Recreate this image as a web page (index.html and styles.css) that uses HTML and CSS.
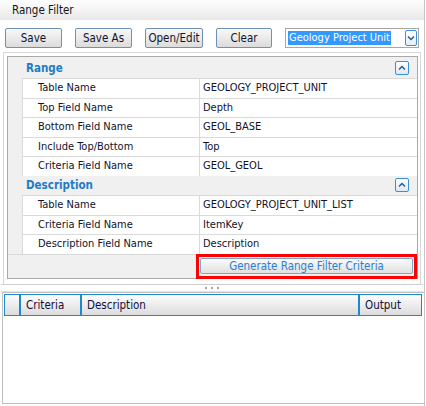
FILE: index.html
```html
<!DOCTYPE html>
<html>
<head>
<meta charset="utf-8">
<link rel="stylesheet" href="styles.css">
</head>
<body>
<div class="window">
  <div class="titlebar">Range Filter</div>
  <div class="toolbar">
    <button class="btn b-save">Save</button>
    <button class="btn b-saveas">Save As</button>
    <button class="btn b-open">Open/Edit</button>
    <button class="btn b-clear">Clear</button>
    <div class="combo">
      <span class="sel">Geology Project Unit</span>
      <span class="drop"><svg width="10" height="14" viewBox="0 0 10 14"><path d="M2 5.5 L5 8.5 L8 5.5" fill="none" stroke="#1d5f9a" stroke-width="1.5"/></svg></span>
    </div>
  </div>
  <div class="toppane">
    <div class="pgrid">
      <div class="cat cat-first">
        <span class="cat-title">Range</span>
        <span class="collapse"><svg width="12" height="12" viewBox="0 0 12 12"><path d="M3 7.5 L6 4.5 L9 7.5" fill="none" stroke="#1d5f9a" stroke-width="1.5"/></svg></span>
      </div>
      <div class="rows">
        <div class="row"><div class="name">Table Name</div><div class="val">GEOLOGY_PROJECT_UNIT</div></div>
        <div class="row"><div class="name">Top Field Name</div><div class="val">Depth</div></div>
        <div class="row"><div class="name">Bottom Field Name</div><div class="val">GEOL_BASE</div></div>
        <div class="row"><div class="name">Include Top/Bottom</div><div class="val">Top</div></div>
        <div class="row"><div class="name">Criteria Field Name</div><div class="val">GEOL_GEOL</div></div>
      </div>
      <div class="cat">
        <span class="cat-title">Description</span>
        <span class="collapse"><svg width="12" height="12" viewBox="0 0 12 12"><path d="M3 7.5 L6 4.5 L9 7.5" fill="none" stroke="#1d5f9a" stroke-width="1.5"/></svg></span>
      </div>
      <div class="rows">
        <div class="row"><div class="name">Table Name</div><div class="val">GEOLOGY_PROJECT_UNIT_LIST</div></div>
        <div class="row"><div class="name">Criteria Field Name</div><div class="val">ItemKey</div></div>
        <div class="row"><div class="name">Description Field Name</div><div class="val">Description</div></div>
      </div>
      <div class="actions">
        <div class="highlight"><button class="gen">Generate Range Filter Criteria</button></div>
      </div>
    </div>
  </div>
  <div class="splitter"><span class="dot"></span><span class="dot"></span><span class="dot"></span></div>
  <div class="bottompane">
    <div class="ghead">
      <div class="gh c0"></div>
      <div class="gh c1">Criteria</div>
      <div class="gh c2">Description</div>
      <div class="gh c3">Output</div>
    </div>
  </div>
</div>
</body>
</html>
```

FILE: styles.css
```css
* { box-sizing: border-box; }
html, body { margin: 0; padding: 0; background: #ffffff; }
body {
  font-family: "DejaVu Sans Condensed", "Liberation Sans", sans-serif;
  font-stretch: condensed;
  font-size: 11px;
  color: #12122a;
}
.window {
  width: 425px;
  height: 406px;
  border-right: 1px solid #c4c4c4;
  display: flex;
  flex-direction: column;
}
.titlebar {
  height: 20px;
  line-height: 21px;
  padding-left: 12px;
  background: linear-gradient(#fefefe, #e8e8e8);
  color: #151515;
  font-size: 11.5px;
}
.toolbar {
  margin-top: 8px;
  height: 20px;
  padding-left: 5px;
  display: flex;
  gap: 13px;
}
.btn {
  height: 20px;
  padding: 0;
  border: 1px solid #6f92b4;
  border-radius: 2px;
  background: linear-gradient(#f8f8f8, #dcdcdc);
  font: inherit;
  font-size: 11.5px;
  color: #12122a;
}
.b-save { width: 57px; }
.b-saveas { width: 57px; }
.b-open { width: 58px; }
.b-clear { width: 56px; }
.combo {
  width: 134px;
  height: 20px;
  border: 1px solid #a7a7a7;
  display: flex;
  align-items: center;
  justify-content: space-between;
  padding: 0 1px 0 2px;
  background: #fff;
}
.sel {
  background: #3399ff;
  color: #ffffff;
  height: 14px;
  line-height: 14px;
  padding: 0 1px;
  font-size: 11px;
}
.drop {
  width: 12px;
  height: 16px;
  border: 1px solid #3b8fd6;
  border-radius: 2px;
  background: linear-gradient(#ffffff, #e6eef6);
  display: flex;
  align-items: center;
  justify-content: center;
}
.toppane {
  margin: 4px 3px 0 3px;
  padding: 3px 2px 5px 3px;
  border-top: 1px solid #d6d6d6;
  border-left: 1px solid #d6d6d6;
  border-right: 1px solid #d6d6d6;
}
.pgrid {
  border: 1px solid #a9a9a9;
  background: #f0f0f0;
  display: flex;
  flex-direction: column;
}
.cat {
  height: 19.5px;
  display: flex;
  align-items: center;
  justify-content: space-between;
  padding: 0 8px 0 18px;
}
.cat-first { height: 21px; }
.cat-title {
  font-weight: bold;
  color: #1e7cc4;
  font-size: 11.5px;
}
.collapse {
  width: 14px;
  height: 14px;
  border: 1px solid #3b8fd6;
  border-radius: 2px;
  background: linear-gradient(#ffffff, #dfe7f0);
  display: flex;
  align-items: center;
  justify-content: center;
}
.rows {
  margin-left: 14px;
  background: #ffffff;
}
.row {
  display: grid;
  grid-template-columns: 177px 1fr;
  height: 19.5px;
  border-top: 1px solid #dadada;
  border-left: 1px solid #dadada;
}
.name {
  padding-left: 15px;
  line-height: 18px;
  border-right: 1px solid #dadada;
}
.val {
  padding-left: 3px;
  line-height: 18px;
}
.actions {
  display: flex;
  justify-content: flex-end;
  padding-right: 0;
  border-top: 1px solid #dadada;
  margin-bottom: -1px;
}
.highlight {
  width: 221px;
  height: 25px;
  margin-top: -1px;
  border: 3px solid #ff0000;
  padding: 1px 1px 2px 1px;
}
.gen {
  width: 100%;
  height: 16px;
  padding: 0;
  border: 1px solid #7ea6c8;
  border-radius: 2px;
  background: linear-gradient(#fbfbfb, #e0e0e0);
  font: inherit;
  font-size: 11.5px;
  color: #2b7fd0;
  line-height: 14px;
}
.splitter {
  height: 8px;
  margin: 0 1px;
  border-top: 1px solid #d0d0d0;
  border-bottom: 1px solid #e2e2e2;
  display: flex;
  justify-content: center;
  align-items: center;
  gap: 4px;
}
.dot {
  width: 2px;
  height: 2px;
  background: #a8a8a8;
}
.bottompane {
  flex: 1;
  margin: 0 0 2px 2px;
  border: 1px solid #c0c0c0;
  border-right: none;
  padding: 1px 2px 0 1px;
}
.ghead {
  display: flex;
  height: 22px;
}
.gh {
  border: 1px solid #1e88cc;
  background: linear-gradient(#fdfdfd, #dcdcdc);
  line-height: 20px;
  padding-left: 5px;
  color: #10103c;
  font-size: 11.5px;
}
.c0 { width: 16px; }
.c1 { width: 61px; }
.c2 { width: 278px; }
.c3 { flex: 1; }
```
